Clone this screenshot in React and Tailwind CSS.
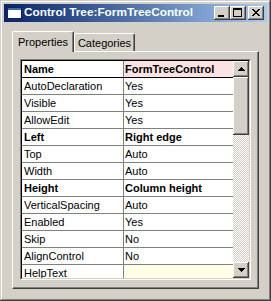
import React from "react";

const rows = [
  { n: "Name", v: "FormTreeControl", bold: true, head: true },
  { n: "AutoDeclaration", v: "Yes" },
  { n: "Visible", v: "Yes" },
  { n: "AllowEdit", v: "Yes" },
  { n: "Left", v: "Right edge", bold: true },
  { n: "Top", v: "Auto" },
  { n: "Width", v: "Auto" },
  { n: "Height", v: "Column height", bold: true },
  { n: "VerticalSpacing", v: "Auto" },
  { n: "Enabled", v: "Yes" },
  { n: "Skip", v: "No" },
  { n: "AlignControl", v: "No" },
  { n: "HelpText", v: "", help: true },
];

const raised =
  "shadow-[inset_-1px_-1px_#404040,inset_1px_1px_#ffffff,inset_-2px_-2px_#808080,inset_2px_2px_#d4d0c8]";

function CapBtn({ children, className = "" }) {
  return (
    <div className={`w-[16px] h-[14px] bg-[#d4d0c8] ${raised} flex ${className}`}>{children}</div>
  );
}

function ScrollBtn({ down }) {
  return (
    <div className={`w-[16px] h-[16px] bg-[#d4d0c8] ${raised} flex items-center justify-center`}>
      <svg width="7" height="4" viewBox="0 0 7 4" shapeRendering="crispEdges">
        {down ? (
          <polygon points="0,0 7,0 3.5,4" fill="#000" />
        ) : (
          <polygon points="3.5,0 7,4 0,4" fill="#000" />
        )}
      </svg>
    </div>
  );
}

export default function App() {
  return (
    <div
      className="w-[271px] h-[301px] bg-[#d4d0c8] p-[4px] flex flex-col shadow-[inset_-1px_-1px_#404040,inset_1px_1px_#d4d0c8,inset_-2px_-2px_#808080,inset_2px_2px_#ffffff]"
      style={{ fontFamily: '"Liberation Sans", Arial, sans-serif' }}
    >
      {/* Title bar */}
      <div className="h-[18px] flex items-center bg-linear-to-r from-[#0a246a] to-[#a6caf0] pl-[3px] pr-[3px]">
        <svg width="15" height="12" viewBox="0 0 15 12" shapeRendering="crispEdges" className="shrink-0">
          <rect x="0" y="0" width="15" height="12" fill="#0a246a" />
          <rect x="1" y="1" width="13" height="2" fill="#3a6ea5" />
          <rect x="1" y="3" width="13" height="8" fill="#ffffff" />
        </svg>
        <span className="ml-[2px] text-white font-bold text-[11.8px] leading-none whitespace-nowrap">
          Control Tree:FormTreeControl
        </span>
        <div className="ml-auto flex items-center">
          <CapBtn>
            <svg width="16" height="14" viewBox="0 0 16 14" shapeRendering="crispEdges">
              <rect x="4" y="9" width="6" height="2" fill="#000" />
            </svg>
          </CapBtn>
          <CapBtn>
            <svg width="16" height="14" viewBox="0 0 16 14" shapeRendering="crispEdges">
              <rect x="3" y="2" width="9" height="2" fill="#000" />
              <rect x="3" y="4" width="1" height="7" fill="#000" />
              <rect x="11" y="4" width="1" height="7" fill="#000" />
              <rect x="3" y="10" width="9" height="1" fill="#000" />
            </svg>
          </CapBtn>
          <CapBtn className="ml-[2px]">
            <svg width="16" height="14" viewBox="0 0 16 14" shapeRendering="crispEdges">
              <path d="M4 3h2v1h1v1h2V4h1V3h2v1h-1v1h-1v1h-1v1h1v1h1v1h1v1h-2V9H9V8H7v1H6v1H4V9h1V8h1V7h1V6H6V5H5V4H4z" fill="#000" />
            </svg>
          </CapBtn>
        </div>
      </div>

      {/* Body */}
      <div className="flex-1 flex flex-col px-[8px] pt-[9px] pb-[8px]">
        {/* Tabs */}
        <div className="h-[20px] flex items-end text-[11px] text-black">
          <div className="relative z-10 h-[21px] -mb-[1px] w-[62px] bg-[#d4d0c8] border-l border-t border-white border-r border-r-[#404040] rounded-tl-[2px] rounded-tr-[2px] shadow-[inset_-1px_0_#808080] flex justify-center pt-[4px]">
            <span className="leading-[13px]">Properties</span>
          </div>
          <div className="h-[18px] w-[61px] bg-[#d4d0c8] border-l border-t border-white border-r border-r-[#404040] rounded-tl-[2px] rounded-tr-[2px] shadow-[inset_-1px_0_#808080] flex justify-center pt-[3px]">
            <span className="leading-[13px]">Categories</span>
          </div>
        </div>

        {/* Panel */}
        <div className="flex-1 border-l border-t border-white border-r border-b border-r-[#404040] border-b-[#404040] shadow-[inset_-1px_-1px_#808080] pl-[7px] pt-[7px]">
          <div className="w-[231px] h-[221px] border-l border-t border-[#808080] border-r border-b border-r-white border-b-white">
            <div className="h-full border-l border-t border-black border-r border-b border-r-[#d4d0c8] border-b-[#d4d0c8] flex">
              {/* grid */}
              <div className="w-[211px] h-[217px] overflow-hidden bg-white text-[11px] text-black">
                {rows.map((r) => (
                  <div
                    key={r.n}
                    className={`h-[17px] flex border-b ${r.head ? "border-black" : "border-[#808080]"}`}
                  >
                    <div
                      className={`w-[102px] shrink-0 border-r border-[#808080] pl-[2px] flex items-center whitespace-nowrap ${
                        r.bold ? "font-bold" : ""
                      }`}
                    >
                      {r.n}
                    </div>
                    <div
                      className={`flex-1 pl-[1px] flex items-center whitespace-nowrap ${r.bold ? "font-bold" : ""} ${
                        r.head ? "bg-[#fde2e2]" : r.help ? "bg-[#ffffe6]" : "bg-white"
                      }`}
                    >
                      {r.v}
                    </div>
                  </div>
                ))}
              </div>
              {/* scrollbar */}
              <div className="w-[16px] h-[217px] flex flex-col">
                <ScrollBtn />
                <div className={`h-[58px] bg-[#d4d0c8] ${raised}`} />
                <div className="flex-1 bg-[repeating-conic-gradient(#d4d0c8_0%_25%,#ffffff_0%_50%)] bg-[length:2px_2px]" />
                <ScrollBtn down />
              </div>
            </div>
          </div>
        </div>
      </div>
    </div>
  );
}
